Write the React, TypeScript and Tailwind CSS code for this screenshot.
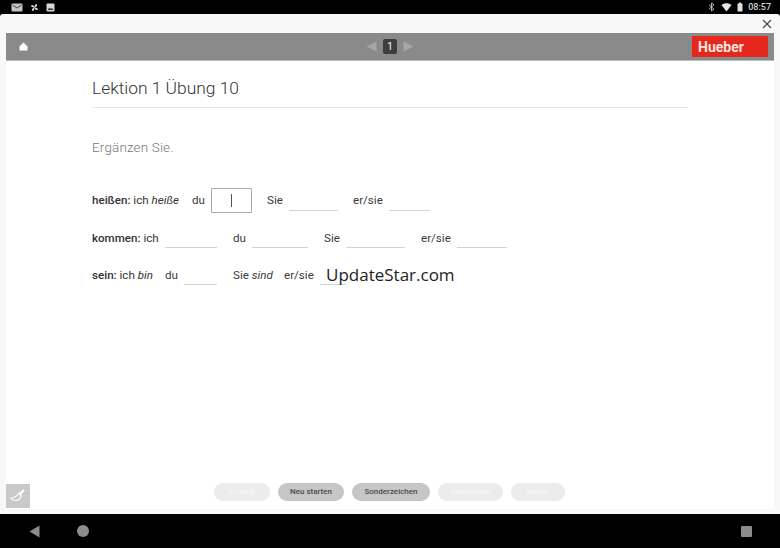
import React from "react";

function Blank({ w, gap, h }: { w: string; gap: string; h: string }) {
  return <span className={`${w} ${gap} ${h} self-start border-b border-[#d4d4d4]`} />;
}

function Pill({ label, active, w }: { label: string; active?: boolean; w: string }) {
  return (
    <div
      className={`${w} h-[18px] rounded-full flex items-center justify-center text-[8px] font-medium ${
        active ? "bg-[#c6c6c6] text-[#4a4a4a]" : "bg-[#ececec] text-[#f6f6f6]"
      }`}
    >
      {label}
    </div>
  );
}

export default function App() {
  return (
    <div className="relative w-[780px] h-[548px] bg-black flex flex-col overflow-hidden font-['Roboto',sans-serif] text-[#3a3a3a]">
      {/* status bar */}
      <div className="h-[14px] shrink-0 flex items-center pl-[11px] pr-[9px]">
        <svg width="12" height="9" viewBox="0 0 12 9">
          <rect x="0.5" y="0.5" width="11" height="8" rx="1" fill="#c4c4c4" />
          <path d="M1.5 2l4.5 3 4.5-3" stroke="#444" strokeWidth="1" fill="none" />
        </svg>
        <svg width="9" height="9" viewBox="0 0 9 9" className="ml-[7px]">
          <path d="M4.5 4.5C2 4.5 1 3.5 1 2.5 2.5 1 4 2.5 4.5 4.5ZM4.5 4.5C4.5 2 5.5 1 6.5 1 8 2.5 6.5 4 4.5 4.5ZM4.5 4.5C7 4.5 8 5.5 8 6.5 6.5 8 5 6.5 4.5 4.5ZM4.5 4.5C4.5 7 3.5 8 2.5 8 1 6.5 2.5 5 4.5 4.5Z" fill="#d8d8d8" />
        </svg>
        <svg width="9" height="9" viewBox="0 0 9 9" className="ml-[7px]">
          <rect x="0.5" y="0.5" width="8" height="8" rx="1" fill="#d8d8d8" />
          <path d="M1.5 7l2-2.5 1.5 1.5 1-1 1.5 2z" fill="#333" />
        </svg>
        <div className="ml-auto flex items-center">
          <svg width="7" height="10" viewBox="0 0 7 10">
            <path d="M1 2.8l5 4.4L3.5 9V1L6 2.8 1 7.2" stroke="#c8c8c8" strokeWidth="0.9" fill="none" />
          </svg>
          <svg width="11" height="9" viewBox="0 0 11 9" className="ml-[6px]">
            <path d="M0.5 2C3.5-0.3 7.5-0.3 10.5 2L5.5 8.5Z" fill="#e8e8e8" />
          </svg>
          <svg width="6" height="10" viewBox="0 0 6 10" className="ml-[5px]">
            <path d="M2 0.5h2v1h1.5v8h-5v-8H2z" fill="#e0e0e0" />
          </svg>
          <span className="ml-[5px] text-[9px] leading-none font-medium text-[#d4d4d4]">08:57</span>
        </div>
      </div>

      {/* window */}
      <div className="h-[500px] shrink-0 bg-[#f8f8f8] rounded-t-[3px] flex flex-col pb-[5px]">
        <div className="h-[19px] shrink-0 flex justify-end items-center pr-[8px] pt-[1px]">
          <svg width="10" height="10" viewBox="0 0 10 10">
            <path d="M1 1l8 8M9 1l-8 8" stroke="#444" strokeWidth="1.1" />
          </svg>
        </div>
        <div className="relative flex-1 mx-[6px] bg-white flex flex-col">
          {/* header */}
          <div className="h-[28px] shrink-0 bg-[#8a8a8a] border-b border-[#bdbdbd] grid grid-cols-[1fr_auto_1fr] items-center pl-[13px] pr-[6px]">
            <svg width="9" height="9" viewBox="0 0 9 9">
              <path d="M4.5 0.5L8.5 4.5V8.5H0.5V4.5Z" fill="#fff" />
            </svg>
            <div className="flex items-center gap-[6px] ml-[-7px]">
              <svg width="11" height="11" viewBox="0 0 11 11">
                <path d="M10.5 0.5V10.5L0.5 5.5Z" fill="#a6a6a6" />
              </svg>
              <div className="w-[14px] h-[15px] rounded-[2px] bg-[#3d3d3d] text-white text-[10px] flex items-center justify-center">
                1
              </div>
              <svg width="11" height="11" viewBox="0 0 11 11">
                <path d="M0.5 0.5V10.5L10.5 5.5Z" fill="#a6a6a6" />
              </svg>
            </div>
            <div className="justify-self-end w-[76px] h-[21px] bg-[#e5281e] flex items-center pl-[6px] text-[14px] leading-none font-bold text-[#fbe4df]">
              Hueber
            </div>
          </div>

          {/* content */}
          <div className="flex-1 pl-[86px] pr-[86px] flex flex-col">
            <h1 className="mt-[15px] text-[17.4px] leading-[24px] font-light text-[#333]">Lektion 1 Übung 10</h1>
            <div className="mt-[7px] h-px bg-[#e6e6e6]" />
            <p className="mt-[30px] text-[13.4px] leading-[20px] tracking-[0.2px] font-light text-[#777]">Ergänzen Sie.</p>

            <div className="mt-[30px] text-[11.6px] leading-none">
              <div className="h-[25px] flex items-center whitespace-nowrap">
                <span className="w-[88px] text-[#333]">
                  <b className="font-medium text-[#333]">heißen:</b> ich <i>heiße</i>
                </span>
                <span className="ml-[12px] w-[12px]">du</span>
                <span className="ml-[7px] w-[41px] h-[25px] border border-[#a8a8a8] rounded-[1px] flex items-center justify-center">
                  <span className="w-px h-[13px] bg-[#555]" />
                </span>
                <span className="ml-[15px] w-[16px]">Sie</span>
                <Blank w="w-[49px]" gap="ml-[6px]" h="h-[23px]" />
                <span className="ml-[15px] w-[30px]">er/sie</span>
                <Blank w="w-[41px]" gap="ml-[6px]" h="h-[23px]" />
              </div>

              <div className="mt-[13px] h-[25px] flex items-center whitespace-nowrap">
                <span className="w-[67px] text-[#333]">
                  <b className="font-medium text-[#333]">kommen:</b> ich
                </span>
                <Blank w="w-[52px]" gap="ml-[6px]" h="h-[22px]" />
                <span className="ml-[16px] w-[12px]">du</span>
                <Blank w="w-[56px]" gap="ml-[7px]" h="h-[22px]" />
                <span className="ml-[16px] w-[16px]">Sie</span>
                <Blank w="w-[59px]" gap="ml-[6px]" h="h-[22px]" />
                <span className="ml-[16px] w-[30px]">er/sie</span>
                <Blank w="w-[50px]" gap="ml-[6px]" h="h-[22px]" />
              </div>

              <div className="mt-[12px] h-[25px] flex items-center whitespace-nowrap">
                <span className="w-[61px] text-[#333]">
                  <b className="font-medium text-[#333]">sein:</b> ich <i>bin</i>
                </span>
                <span className="ml-[12px] w-[13px]">du</span>
                <Blank w="w-[33px]" gap="ml-[6px]" h="h-[22px]" />
                <span className="ml-[16px] w-[40px]">
                  Sie <i>sind</i>
                </span>
                <span className="ml-[11px] w-[30px]">er/sie</span>
                <Blank w="w-[26px]" gap="ml-[6px]" h="h-[22px]" />
              </div>
            </div>
          </div>

          {/* footer */}
          <div className="h-[26px] shrink-0 flex items-start pl-[208px] gap-[8px] relative">
            <Pill label="Lösung" w="w-[56px]" />
            <Pill label="Neu starten" active w="w-[66px]" />
            <Pill label="Sonderzeichen" active w="w-[78px]" />
            <Pill label="Überprüfen" w="w-[65px]" />
            <Pill label="Weiter" w="w-[54px]" />
            <div className="absolute left-0 top-[1px] w-[24px] h-[24px] bg-[#c9c9c9] flex items-center justify-center">
              <svg width="18" height="16" viewBox="0 0 18 16" fill="none">
                <path d="M10.5 6.5L15 2" stroke="#fff" strokeWidth="2.4" />
                <path d="M10 5L12.5 8 10 11.5C7 13 3.5 12.5 2 10 5 10 8 8 10 5Z" stroke="#fff" strokeWidth="1.2" />
              </svg>
            </div>
          </div>
        </div>
      </div>

      {/* nav bar */}
      <div className="flex-1 flex items-center pl-[29px] pr-[29px]">
        <svg width="11" height="13" viewBox="0 0 11 13">
          <path d="M10.5 0.5V12.5L0.5 6.5Z" fill="#8c8c8c" />
        </svg>
        <div className="ml-[37px] w-[12px] h-[12px] rounded-full bg-[#8c8c8c]" />
        <div className="ml-auto mr-[-1px] w-[11px] h-[11px] rounded-[1px] bg-[#8c8c8c]" />
      </div>

      {/* watermark */}
      <div className="absolute left-[326px] top-[264px] text-[17px] leading-[22px] text-[#222] font-['Open_Sans',sans-serif]">
        UpdateStar.com
      </div>
    </div>
  );
}
